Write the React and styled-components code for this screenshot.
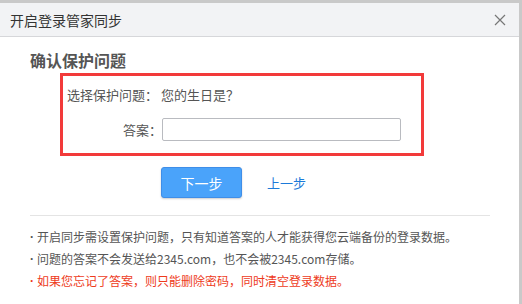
import React from "react";
import styled, { createGlobalStyle } from "styled-components";

const GlobalStyle = createGlobalStyle`
  html, body { margin: 0; padding: 0; background: #c9c9c9; }
  body {
    font-family: "Microsoft YaHei", "Noto Sans CJK SC", "Liberation Sans", sans-serif;
    width: 522px; height: 304px; overflow: hidden;
  }
`;

const Screen = styled.div`
  padding: 3px 3px 0 0;
  height: 304px;
  box-sizing: border-box;
`;

const Dialog = styled.div`
  background: #fff;
  height: 100%;
  border-top-right-radius: 3px;
  display: flex;
  flex-direction: column;
`;

const TitleBar = styled.div`
  height: 33px;
  background: #f2f3f5;
  border-bottom: 1px solid #d6d7da;
  display: flex;
  align-items: center;
  justify-content: space-between;
  padding: 0 12px 0 10px;
  font-size: 14px;
  color: #333;
`;

const Close = styled.button`
  border: 0;
  background: none;
  padding: 0;
  width: 14px;
  height: 14px;
  display: flex;
`;

const Body = styled.div`
  padding: 12px 29px 0 30px;
`;

const Heading = styled.h2`
  margin: 0;
  font-size: 16px;
  font-weight: bold;
  color: #555;
  line-height: 22px;
`;

const Highlight = styled.div`
  margin: 2px 0 0 30px;
  width: 364px;
  height: 83px;
  box-sizing: border-box;
  border: 3px solid #f23a3a;
  padding: 7px 0 0 4px;
  font-size: 13px;
  color: #555;
`;

const Row = styled.div`
  display: flex;
  align-items: center;
  height: ${(p) => p.h}px;
`;

const Label = styled.span`
  width: 95px;
  text-align: right;
  flex-shrink: 0;
`;

const Input = styled.input`
  width: 239px;
  height: 23px;
  box-sizing: border-box;
  border: 1px solid #b9bbc0;
  border-radius: 2px;
  margin-left: 0;
`;

const Actions = styled.div`
  display: flex;
  align-items: center;
  padding: 11px 0 0 131px;
  gap: 25px;
`;

const Primary = styled.button`
  width: 81px;
  height: 31px;
  border: 1px solid #3f8ee8;
  border-radius: 3px;
  background: #4aa3fa;
  color: #fff;
  font-size: 14px;
  font-family: inherit;
  box-shadow: 0 1px 2px rgba(0, 0, 0, 0.2);
`;

const Back = styled.a`
  font-size: 13px;
  color: #1c7ad9;
  cursor: pointer;
`;

const Divider = styled.hr`
  margin: 17px 0 0 0;
  width: 460px;
  border: 0;
  border-top: 1px solid #e4e4e4;
`;

const Notes = styled.ul`
  list-style: none;
  margin: 0;
  padding: 10px 0 0 0;
`;

const Note = styled.li`
  display: flex;
  font-size: 12px;
  line-height: 22px;
  color: ${(p) => (p.warn ? "#ee3b1c" : "#555")};
`;

const Dot = styled.span`
  width: 7px;
  flex-shrink: 0;
  font-family: "Liberation Sans", sans-serif;
  font-weight: bold;
`;

export default function App() {
  return (
    <>
      <GlobalStyle />
      <Screen>
        <Dialog>
          <TitleBar>
            开启登录管家同步
            <Close aria-label="关闭">
              <svg width="14" height="14" viewBox="0 0 14 14">
                <path d="M2 2L12 12M12 2L2 12" stroke="#777" strokeWidth="1.2" />
              </svg>
            </Close>
          </TitleBar>
          <Body>
            <Heading>确认保护问题</Heading>
            <Highlight>
              <Row h={22}>选择保护问题：&nbsp;您的生日是？</Row>
              <Row h={41} style={{ marginTop: 4 }}>
                <Label>答案：</Label>
                <Input />
              </Row>
            </Highlight>
            <Actions>
              <Primary>下一步</Primary>
              <Back>上一步</Back>
            </Actions>
            <Divider />
            <Notes>
              <Note><Dot>·</Dot>开启同步需设置保护问题，只有知道答案的人才能获得您云端备份的登录数据。</Note>
              <Note><Dot>·</Dot>问题的答案不会发送给2345.com，也不会被2345.com存储。</Note>
              <Note warn><Dot>·</Dot>如果您忘记了答案，则只能删除密码，同时清空登录数据。</Note>
            </Notes>
          </Body>
        </Dialog>
      </Screen>
    </>
  );
}
